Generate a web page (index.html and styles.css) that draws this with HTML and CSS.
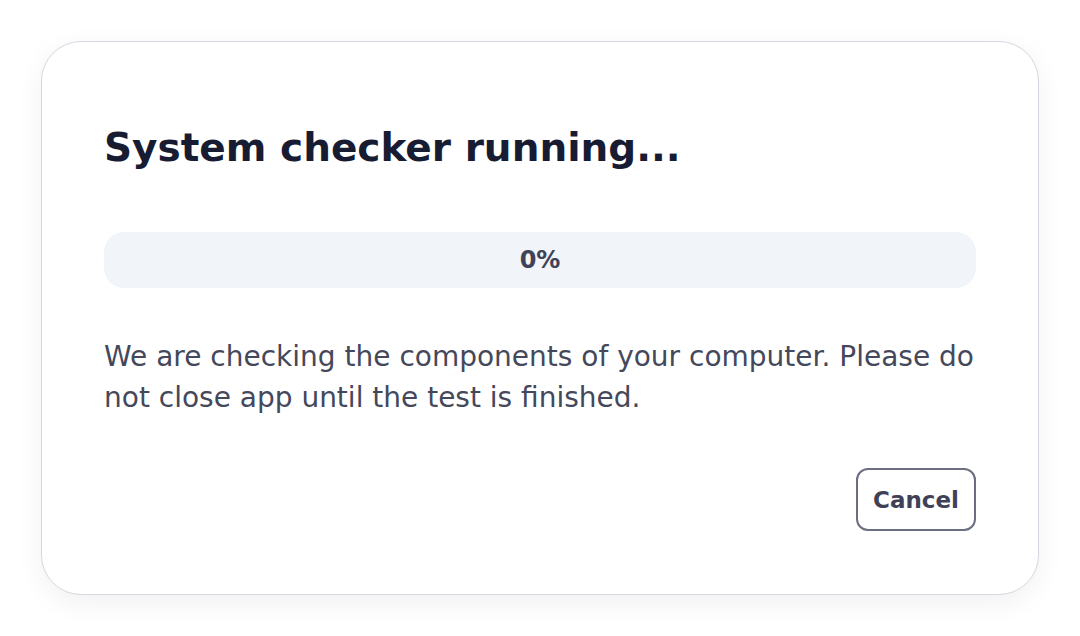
FILE: index.html
```html
<!DOCTYPE html>
<html lang="en">
<head>
<meta charset="utf-8">
<title>System checker</title>
<link rel="stylesheet" href="styles.css">
</head>
<body>
<main class="stage">
  <section class="card">
    <h1 class="title">System checker running...</h1>
    <div class="progress"><span class="progress-label">0%</span></div>
    <p class="message">We are checking the components of your computer. Please do not close app until the test is finished.</p>
    <div class="actions">
      <button class="btn-cancel" type="button">Cancel</button>
    </div>
  </section>
</main>
</body>
</html>
```
FILE: styles.css
```css
* { box-sizing: border-box; }
html, body { margin: 0; padding: 0; background: #ffffff; }
body {
  font-family: "DejaVu Sans", "Open Sans", sans-serif;
  width: 1080px;
  height: 636px;
  overflow: hidden;
}
.stage {
  padding: 41px 41px 0 41px;
}
.card {
  width: 998px;
  height: 554px;
  background: #ffffff;
  border: 1.5px solid #d5d8e0;
  border-radius: 40px;
  box-shadow: 0 8px 28px rgba(20, 24, 40, 0.06);
  padding: 78px 62px 0 62px;
  display: flex;
  flex-direction: column;
}
.title {
  margin: 0;
  font-size: 39px;
  line-height: 56px;
  font-weight: 700;
  color: #181c33;
  letter-spacing: 0;
}
.progress {
  margin-top: 56px;
  height: 56px;
  border-radius: 20px;
  background: #f1f4f8;
  display: flex;
  align-items: center;
  justify-content: center;
}
.progress-label {
  font-size: 24px;
  font-weight: 700;
  color: #3f4256;
}
.message {
  margin: 48px 0 0 0;
  font-size: 28px;
  line-height: 41px;
  color: #45485b;
}
.actions {
  margin-top: 50px;
  display: flex;
  justify-content: flex-end;
}
.btn-cancel {
  font-family: inherit;
  width: 120px;
  height: 63px;
  border: 2px solid #6b6e80;
  border-radius: 12px;
  background: #ffffff;
  color: #3f4256;
  font-size: 23px;
  font-weight: 700;
  padding: 0;
}
```
